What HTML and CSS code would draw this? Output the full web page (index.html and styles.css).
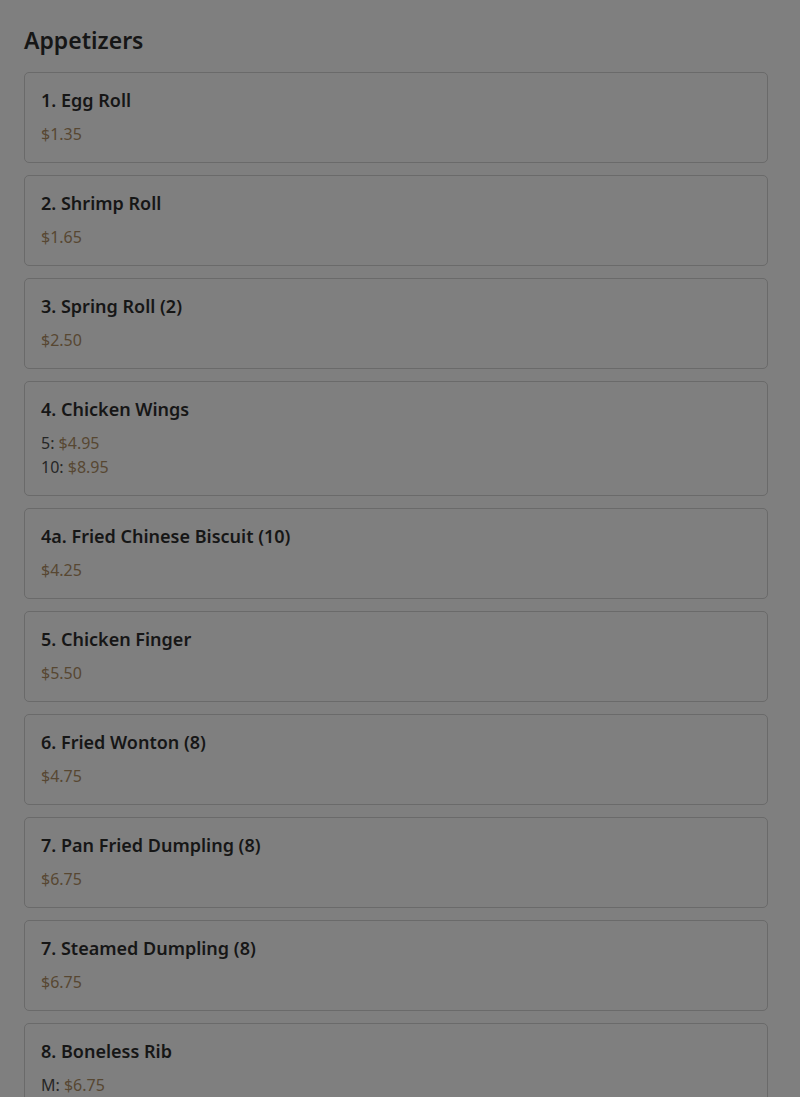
FILE: index.html
```html
<!DOCTYPE html>
<html lang="en">
<head>
<meta charset="utf-8">
<title>Appetizers</title>
<link rel="stylesheet" href="styles.css">
</head>
<body>
<main class="menu">
  <h1 class="section-title">Appetizers</h1>
  <ul class="items">
    <li class="card"><h2 class="name">1. Egg Roll</h2><div class="prices"><span class="price">$1.35</span></div></li>
    <li class="card"><h2 class="name">2. Shrimp Roll</h2><div class="prices"><span class="price">$1.65</span></div></li>
    <li class="card"><h2 class="name">3. Spring Roll (2)</h2><div class="prices"><span class="price">$2.50</span></div></li>
    <li class="card"><h2 class="name">4. Chicken Wings</h2><div class="prices"><div>5: <span class="price">$4.95</span></div><div>10: <span class="price">$8.95</span></div></div></li>
    <li class="card"><h2 class="name">4a. Fried Chinese Biscuit (10)</h2><div class="prices"><span class="price">$4.25</span></div></li>
    <li class="card"><h2 class="name">5. Chicken Finger</h2><div class="prices"><span class="price">$5.50</span></div></li>
    <li class="card"><h2 class="name">6. Fried Wonton (8)</h2><div class="prices"><span class="price">$4.75</span></div></li>
    <li class="card"><h2 class="name">7. Pan Fried Dumpling (8)</h2><div class="prices"><span class="price">$6.75</span></div></li>
    <li class="card"><h2 class="name">7. Steamed Dumpling (8)</h2><div class="prices"><span class="price">$6.75</span></div></li>
    <li class="card"><h2 class="name">8. Boneless Rib</h2><div class="prices"><div>M: <span class="price">$6.75</span></div></div></li>
  </ul>
</main>
</body>
</html>
```

FILE: styles.css
```css
html, body {
  margin: 0;
  padding: 0;
  background: #7f7f7f;
}
body {
  font-family: "Noto Sans", "Open Sans", sans-serif;
  color: #161616;
}
.menu {
  padding: 24px 32px 24px 24px;
}
.section-title {
  margin: 0 0 16px;
  font-size: 23px;
  line-height: 32px;
  font-weight: 600;
  color: #161616;
}
.items {
  list-style: none;
  margin: 0;
  padding: 0;
  display: flex;
  flex-direction: column;
  gap: 12px;
}
.card {
  border: 1px solid #6a6a6a;
  border-radius: 5px;
  padding: 14px 16px 16px;
}
.name {
  margin: 0 0 8px;
  font-size: 18px;
  line-height: 27px;
  font-weight: 600;
  color: #161616;
}
.prices {
  font-size: 16px;
  line-height: 24px;
  color: #262626;
}
.price {
  color: #574732;
}
```
